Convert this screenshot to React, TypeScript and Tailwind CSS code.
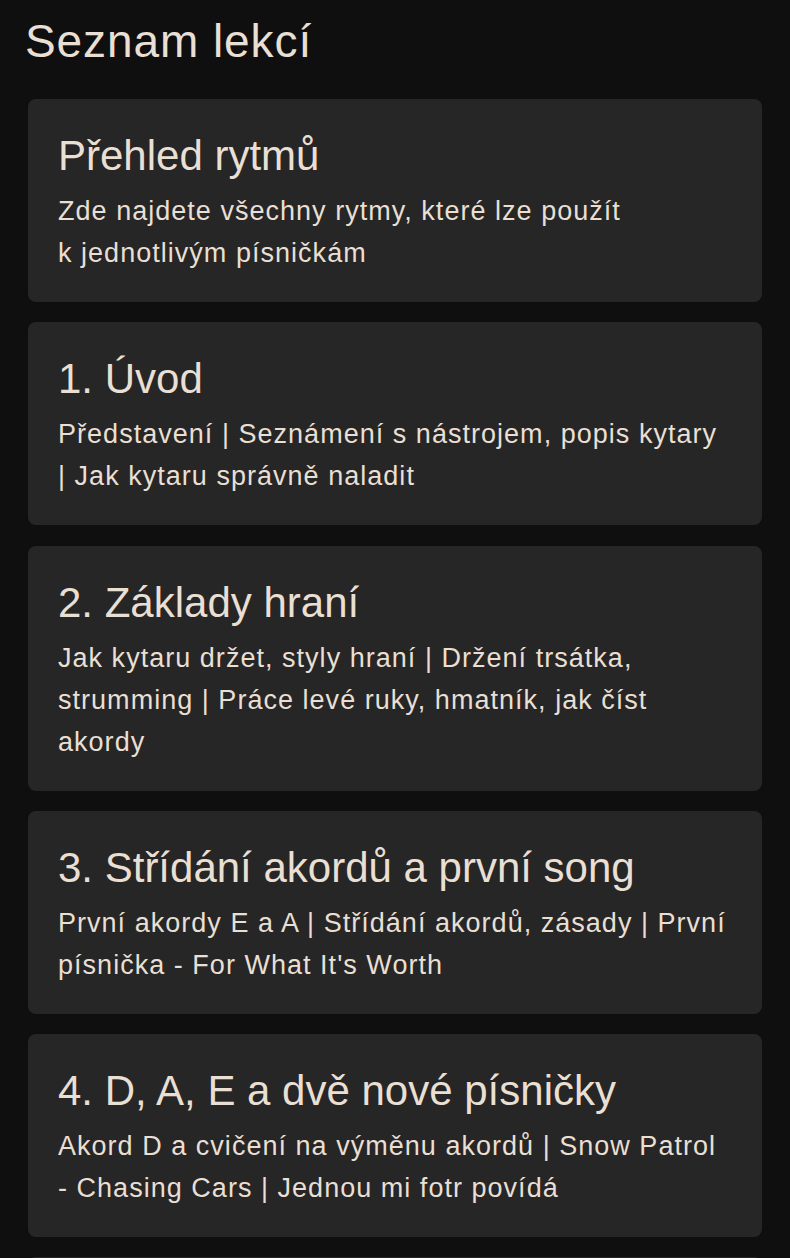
import React from "react";

type Lesson = { title: string; lines: string[] };

const lessons: Lesson[] = [
  {
    title: "Přehled rytmů",
    lines: ["Zde najdete všechny rytmy, které lze použít", "k\u00a0jednotlivým písničkám"],
  },
  {
    title: "1. Úvod",
    lines: ["Představení | Seznámení s\u00a0nástrojem, popis kytary", "| Jak kytaru správně naladit"],
  },
  {
    title: "2. Základy hraní",
    lines: [
      "Jak kytaru držet, styly hraní | Držení trsátka,",
      "strumming | Práce levé ruky, hmatník, jak číst",
      "akordy",
    ],
  },
  {
    title: "3. Střídání akordů a první song",
    lines: ["První akordy E a A | Střídání akordů, zásady | První", "písnička - For What It's Worth"],
  },
  {
    title: "4. D, A, E a dvě nové písničky",
    lines: ["Akord D a cvičení na výměnu akordů | Snow Patrol", "- Chasing Cars | Jednou mi fotr povídá"],
  },
];

export default function App() {
  return (
    <div
      className="min-h-[1258px] bg-[#0f0f0f] text-[#e9dfd3] pt-[14px]"
      style={{ fontFamily: '"Liberation Sans", Arial, sans-serif' }}
    >
      <h1 className="pl-[25px] text-[46px] leading-[55px] tracking-[0.02em] font-normal">Seznam lekcí</h1>
      <div className="mt-[30px] px-[28px] flex flex-col gap-[20.25px]">
        {lessons.map((l) => (
          <div key={l.title} className="bg-[#262626] rounded-lg pl-[30px] pr-[10px] pt-[33px] pb-[28px]">
            <h2 className="text-[42px] leading-[48px] tracking-normal font-normal whitespace-nowrap">{l.title}</h2>
            <p className="mt-[10px] text-[27px] leading-[42px] tracking-[0.038em] whitespace-nowrap">
              {l.lines.map((line, i) => (
                <React.Fragment key={i}>
                  {line}
                  {i < l.lines.length - 1 && <br />}
                </React.Fragment>
              ))}
            </p>
          </div>
        ))}
        <div className="bg-[#262626] rounded-lg h-[40px]" />
      </div>
    </div>
  );
}
